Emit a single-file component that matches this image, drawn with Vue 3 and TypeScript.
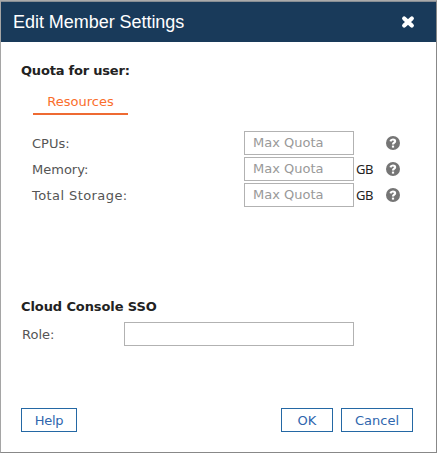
<script setup lang="ts">
import { ref } from 'vue'

interface QuotaField {
  label: string
  unit: string
  value: string
  wide?: boolean
}

const fields = ref<QuotaField[]>([
  { label: 'CPUs:', unit: '', value: '' },
  { label: 'Memory:', unit: 'GB', value: '' },
  { label: 'Total Storage:', unit: 'GB', value: '', wide: true },
])
const role = ref('')
</script>

<template>
  <div class="dialog">
    <header class="header">
      <h1 class="title">Edit Member Settings</h1>
      <button class="close" type="button">
        <svg width="14" height="14" viewBox="0 0 14 14">
          <path d="M3.2 3.4 L10.8 10.6 M10.8 3.4 L3.2 10.6" />
        </svg>
      </button>
    </header>

    <main class="body">
      <h2 class="heading quota-heading">Quota for user:</h2>
      <nav class="tabs">
        <span class="tab">Resources</span>
      </nav>

      <div class="quotas">
        <div v-for="field in fields" :key="field.label" class="row">
          <label class="label" :class="{ wide: field.wide }">{{ field.label }}</label>
          <input v-model="field.value" class="input quota-input" placeholder="Max Quota" />
          <span class="unit">{{ field.unit }}</span>
          <svg class="hint" width="14" height="14" viewBox="0 0 14 14">
            <circle cx="7" cy="7" r="7" />
            <path d="M4.4 5.4 C4.8 4 5.8 3.5 6.9 3.5 C8.3 3.5 9.1 4.2 9.1 5.2 C9.1 6.7 7 6.7 7 8.6" />
            <rect x="5.9" y="9.6" width="2.2" height="2" />
          </svg>
        </div>
      </div>

      <h2 class="heading sso-heading">Cloud Console SSO</h2>
      <div class="role-row">
        <label class="role-label">Role:</label>
        <input v-model="role" class="input role-input" />
      </div>
    </main>

    <footer class="footer">
      <button class="button help" type="button">Help</button>
      <button class="button ok" type="button">OK</button>
      <button class="button cancel" type="button">Cancel</button>
    </footer>
  </div>
</template>

<style>
body {
  margin: 0;
  background: #fff;
}
</style>

<style scoped>
.dialog {
  box-sizing: border-box;
  width: 437px;
  height: 453px;
  display: flex;
  flex-direction: column;
  border: 1px solid #888;
  border-top-color: #aaa;
  border-left-color: #a5a5a5;
  background: #fff;
  color: #555;
  font: 13px/16px Verdana, 'DejaVu Sans', sans-serif;
}
.header {
  box-sizing: border-box;
  height: 41px;
  display: flex;
  align-items: center;
  justify-content: space-between;
  padding: 0 21px 0 12px;
  border-top: 1px solid #888e94;
  background: #193a5a;
}
.title {
  margin: 0;
  color: #fff;
  font: 18px/20px 'Liberation Sans', Arial, sans-serif;
  letter-spacing: -0.04px;
}
.close {
  display: flex;
  padding: 0;
  border: 0;
  background: none;
}
.close path {
  fill: none;
  stroke: #fff;
  stroke-width: 4.2;
  stroke-linecap: round;
}
.body {
  flex: 1;
  padding: 21px 20px 0;
}
.heading {
  margin: 0;
  color: #222;
  font-size: 13px;
  line-height: 16px;
}
.quota-heading {
  letter-spacing: -0.2px;
}
.tabs {
  display: flex;
  padding: 15px 0 0 12px;
}
.tab {
  box-sizing: border-box;
  width: 95px;
  height: 21px;
  border-bottom: 2px solid #ee6a32;
  color: #fa6e2c;
  text-align: center;
}
.quotas {
  display: flex;
  flex-direction: column;
  gap: 2px;
  padding: 16px 0 0 11px;
}
.row {
  display: flex;
  align-items: center;
  height: 24px;
}
.label {
  box-sizing: border-box;
  width: 212px;
  padding-top: 2px;
}
.wide {
  letter-spacing: 0.42px;
}
.input {
  box-sizing: border-box;
  height: 24px;
  margin: 0;
  border: 1px solid #b2b2b2;
  border-radius: 0;
  background: #fff;
  color: #555;
  font: inherit;
  outline: 0;
}
.quota-input {
  width: 110px;
  padding: 0 8px 2px;
}
.input::placeholder {
  color: #999;
  opacity: 1;
}
.unit {
  width: 30px;
  padding-left: 2px;
  color: #222;
  font: 13px/16px 'Noto Sans', sans-serif;
  letter-spacing: -0.4px;
}
.hint circle {
  fill: #757575;
}
.hint path {
  fill: none;
  stroke: #fff;
  stroke-width: 2.2;
}
.hint rect {
  fill: #fff;
}
.sso-heading {
  margin-top: 92px;
  letter-spacing: -0.1px;
}
.role-row {
  display: flex;
  align-items: center;
  margin-top: 7px;
}
.role-label {
  width: 103px;
  padding: 2px 0 0 1px;
  box-sizing: border-box;
}
.role-input {
  width: 230px;
}
.footer {
  display: flex;
  gap: 8px;
  padding: 0 23px 20px 20px;
}
.button {
  box-sizing: border-box;
  height: 24px;
  padding: 2px 0 0;
  border: 1px solid #2468a4;
  background: #fff;
  color: #2f66ae;
  font: inherit;
}
.help {
  width: 56px;
  margin-right: auto;
  letter-spacing: -0.3px;
}
.ok {
  width: 52px;
}
.cancel {
  width: 72px;
}
</style>
